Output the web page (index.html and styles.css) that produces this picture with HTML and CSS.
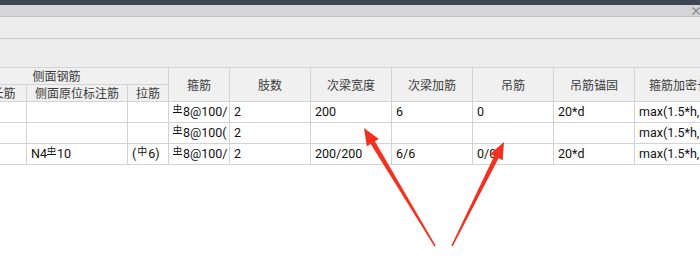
FILE: index.html
```html
<!DOCTYPE html>
<html lang="zh-CN">
<head>
    <meta charset="UTF-8">
    <meta name="viewport" content="width=device-width, initial-scale=1.0">
    <title>梁平法表格</title>
    <link rel="stylesheet" href="styles.css">
</head>
<body>

    <!-- 顶部窗口栏 -->
    <div class="titlebar"></div>
    <div class="tabbar"><span class="close">×</span></div>
    <div class="toolbar"></div>
    <div class="blank"></div>

    <!-- 表格区域 -->
    <div class="grid-wrap">
        <table class="grid">
            <colgroup>
                <col class="w82"><col class="w101"><col class="w41"><col class="w61">
                <col class="w81"><col class="w81"><col class="w81"><col class="w81"><col class="w81"><col class="w101">
            </colgroup>
            <thead>
                <tr class="head1">
                    <th colspan="3">侧面钢筋</th>
                    <th rowspan="2">箍筋</th>
                    <th rowspan="2">肢数</th>
                    <th rowspan="2">次梁宽度</th>
                    <th rowspan="2">次梁加筋</th>
                    <th rowspan="2">吊筋</th>
                    <th rowspan="2">吊筋锚固</th>
                    <th rowspan="2">箍筋加密长度</th>
                </tr>
                <tr class="head2">
                    <th>侧面通长筋</th>
                    <th>侧面原位标注筋</th>
                    <th>拉筋</th>
                </tr>
            </thead>
            <tbody>
                <tr>
                    <td></td>
                    <td></td>
                    <td></td>
                    <td><span class="gr">中</span>8@100/</td>
                    <td>2</td>
                    <td>200</td>
                    <td>6</td>
                    <td>0</td>
                    <td>20*d</td>
                    <td>max(1.5*h,5</td>
                </tr>
                <tr>
                    <td></td>
                    <td></td>
                    <td></td>
                    <td><span class="gr">中</span>8@100(</td>
                    <td>2</td>
                    <td></td>
                    <td></td>
                    <td></td>
                    <td></td>
                    <td>max(1.5*h,5</td>
                </tr>
                <tr>
                    <td></td>
                    <td>N4<span class="gr">中</span>10</td>
                    <td>(<span class="gr1">中</span>6)</td>
                    <td><span class="gr">中</span>8@100/</td>
                    <td>2</td>
                    <td>200/200</td>
                    <td>6/6</td>
                    <td>0/0</td>
                    <td>20*d</td>
                    <td>max(1.5*h,5</td>
                </tr>
            </tbody>
        </table>
    </div>

    <!-- 标注箭头 -->
    <svg class="arrows" width="700" height="271" viewBox="0 0 700 271">
        <polygon points="364,128 378.8,139 374.9,141.3 435.6,245.6 434.4,246.4 370.7,143.9 366.8,146.2" />
        <polygon points="504,142 502.7,160.3 498.6,158.3 452.6,246.4 451.4,245.6 494.2,156.1 490.1,154.1" />
    </svg>

</body>
</html>
```

FILE: styles.css
```css
/* 기본 */
body {
    margin: 0;
    width: 700px;
    height: 271px;
    overflow: hidden;
    background: #ffffff;
    font-family: "Noto Sans CJK SC", sans-serif;
    position: relative;
}

.titlebar {
    height: 5px;
    background: #3e4651;
}

.tabbar {
    height: 11px;
    background: #d5d6da;
    border-bottom: 1px solid #c3c4ca;
    display: flex;
    justify-content: flex-end;
    align-items: center;
}
.close {
    color: #8a8a8e;
    font-size: 12px;
    line-height: 11px;
    margin-right: -2px;
    font-weight: bold;
}

.toolbar {
    height: 21px;
    background: #eeeded;
    border-bottom: 1px solid #c6c6cb;
}

.blank {
    height: 28px;
    background: #eeeded;
}

/* 表格 */
.grid-wrap {
    margin-left: -56px;
}

.grid {
    border-collapse: collapse;
    table-layout: fixed;
    width: 791px;
}
.w82 { width: 82px; }
.w101 { width: 101px; }
.w41 { width: 41px; }
.w61 { width: 61px; }
.w81 { width: 81px; }

.grid th,
.grid td {
    border: 1px solid #d3d3d3;
    padding: 0 4px;
    white-space: nowrap;
    overflow: hidden;
}

.grid th {
    background: #f0f0f0;
    color: #3a3a3a;
    font-weight: normal;
    font-size: 12px;
    text-align: center;
    height: 16px;
    line-height: 16px;
}

.grid td {
    height: 20px;
    line-height: 20px;
    font-family: Roboto, "Noto Sans CJK SC", sans-serif;
    font-size: 12.5px;
    color: #111111;
    text-align: left;
}

/* 钢筋符号 */
.gr {
    display: inline-block;
    font-family: "Noto Sans CJK SC", sans-serif;
    font-size: 9px;
    line-height: 7px;
    border-bottom: 1px solid #111111;
    vertical-align: 4px;
    margin-right: 1px;
}
.gr1 {
    display: inline-block;
    font-family: "Noto Sans CJK SC", sans-serif;
    font-size: 10px;
    line-height: 9px;
    vertical-align: 3px;
    margin: 0 1px;
}

/* 箭头 */
.arrows {
    position: absolute;
    left: 0;
    top: 0;
    fill: #f4301f;
}
```
